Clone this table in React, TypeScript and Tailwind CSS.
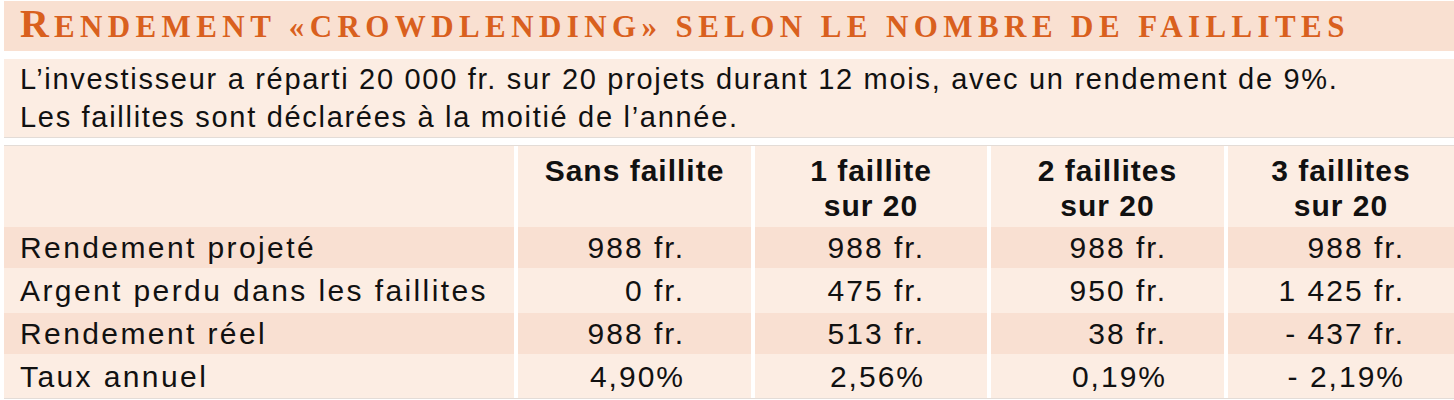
import React from "react";

const rows = [
  { label: "Rendement projeté", vals: ["988 fr.", "988 fr.", "988 fr.", "988 fr."], dark: true, h: "h-[41px]" },
  { label: "Argent perdu dans les faillites", vals: ["0 fr.", "475 fr.", "950 fr.", "1 425 fr."], dark: false, h: "h-[45px]" },
  { label: "Rendement réel", vals: ["988 fr.", "513 fr.", "38 fr.", "- 437 fr."], dark: true, h: "h-[41px]" },
  { label: "Taux annuel", vals: ["4,90%", "2,56%", "0,19%", "- 2,19%"], dark: false, h: "h-[44px]" },
];

const pr = ["pr-[66px]", "pr-[62px]", "pr-[57px]", "pr-[49px]"];

const heads: string[][] = [["Sans faillite"], ["1 faillite", "sur 20"], ["2 faillites", "sur 20"], ["3 faillites", "sur 20"]];

export default function App() {
  return (
    <div className="w-[1454px] h-[400px] bg-white pl-[4px] pt-[1px] text-[#111111] font-['Liberation_Sans',Arial,sans-serif] overflow-hidden">
      {/* Title */}
      <div className="h-[50px] bg-[#f9e0d1] pl-[16px] leading-[46px] text-[40px] font-bold text-[#d9601e] font-['Liberation_Serif','Times_New_Roman',serif] whitespace-nowrap">
        <span className="tracking-[5px]">R</span>
        <span className="text-[31px] tracking-[5.4px]">ENDEMENT «CROWDLENDING» SELON LE NOMBRE DE FAILLITES</span>
      </div>
      <div className="h-[8px]" />
      {/* Intro */}
      <div className="h-[79px] bg-[#fcede3] border-b border-[#e3dcd7] pl-[16px] pt-[1px] text-[29px] leading-[38px] tracking-[1.7px] whitespace-nowrap">
        <div>L’investisseur a réparti 20 000 fr. sur 20 projets durant 12 mois, avec un rendement de 9%.</div>
        <div>Les faillites sont déclarées à la moitié de l’année.</div>
      </div>
      <div className="h-[7px]" />
      <div className="h-[1px] bg-[#e3dcd7]" />
      {/* Table */}
      <div className="grid grid-cols-[510px_233px_232px_233px_226px] gap-x-[4px]">
        <div className="h-[81px] bg-[#fcede3]" />
        {heads.map((lines, i) => (
          <div key={i} className="h-[81px] bg-[#fcede3] pt-[7px] text-center font-bold text-[30px] leading-[35px] tracking-[1px]">
            {lines.map((l) => (
              <div key={l}>{l}</div>
            ))}
          </div>
        ))}
        {rows.map((r) => (
          <React.Fragment key={r.label}>
            <div className={`${r.h} ${r.dark ? "bg-[#f9e0d2]" : "bg-[#fcede3]"} flex items-center pl-[16px] text-[30px] tracking-[2.4px] whitespace-nowrap`}>
              {r.label}
            </div>
            {r.vals.map((v, i) => (
              <div
                key={i}
                className={`${r.h} ${r.dark ? "bg-[#f9e0d2]" : "bg-[#fcede3]"} flex items-center justify-end ${pr[i]} text-[30px] tracking-[2px] whitespace-nowrap`}
              >
                {v}
              </div>
            ))}
          </React.Fragment>
        ))}
      </div>
      <div className="h-[1px] bg-[#e3dcd7]" />
    </div>
  );
}
